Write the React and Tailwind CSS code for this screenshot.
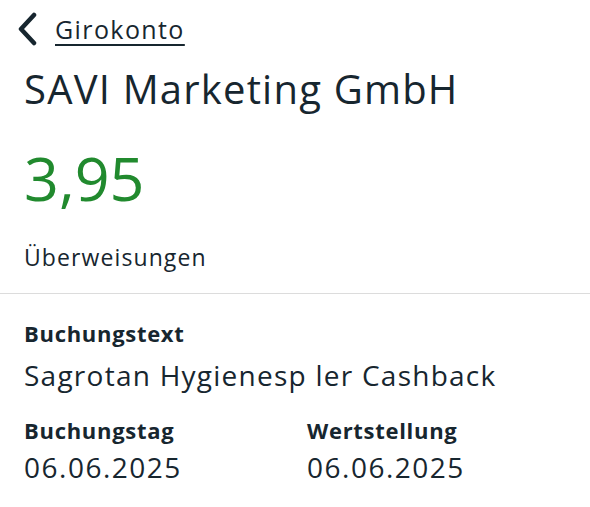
import React from "react";

export default function App() {
  const font = { fontFamily: "'Open Sans', 'Noto Sans', sans-serif" };
  return (
    <div className="w-[590px] h-[507px] bg-white text-[#17262f] overflow-hidden" style={font}>
      <div className="flex items-center pt-[13px] pl-[16px] h-[45px]">
        <svg width="22" height="34" viewBox="0 0 22 34" className="shrink-0">
          <path d="M18 3 L5 17 L18 31" fill="none" stroke="#17262f" strokeWidth="4.5" strokeLinecap="round" strokeLinejoin="round" />
        </svg>
        <span className="ml-[17px] text-[25px] leading-[32px] tracking-[1.4px] underline decoration-2 underline-offset-[5px]">Girokonto</span>
      </div>
      <div className="px-6">
        <div className="mt-[22px] text-[40px] leading-[44px] tracking-[1.2px]">SAVI Marketing GmbH</div>
        <div className="mt-[32px] text-[61px] leading-[70px] text-[#218a2e]">3,95</div>
        <div className="mt-[30px] text-[23px] leading-[28px] tracking-[1.1px]">Überweisungen</div>
      </div>
      <div className="mt-[22px] border-t border-[#dcdcdc]" />
      <div className="px-6">
        <div className="mt-[26px] text-[22px] leading-[26px] font-bold tracking-[0.7px]">Buchungstext</div>
        <div className="mt-[12px] text-[28px] leading-[34px] tracking-[1.25px]">Sagrotan Hygienesp ler Cashback</div>
        <div className="mt-[25px] grid grid-cols-[283px_1fr]">
          <div>
            <div className="text-[22px] leading-[26px] font-bold tracking-[0.7px]">Buchungstag</div>
            <div className="mt-[7px] text-[28px] leading-[34px] tracking-[1.5px]">06.06.2025</div>
          </div>
          <div>
            <div className="text-[22px] leading-[26px] font-bold tracking-[0.7px]">Wertstellung</div>
            <div className="mt-[7px] text-[28px] leading-[34px] tracking-[1.5px]">06.06.2025</div>
          </div>
        </div>
      </div>
    </div>
  );
}
